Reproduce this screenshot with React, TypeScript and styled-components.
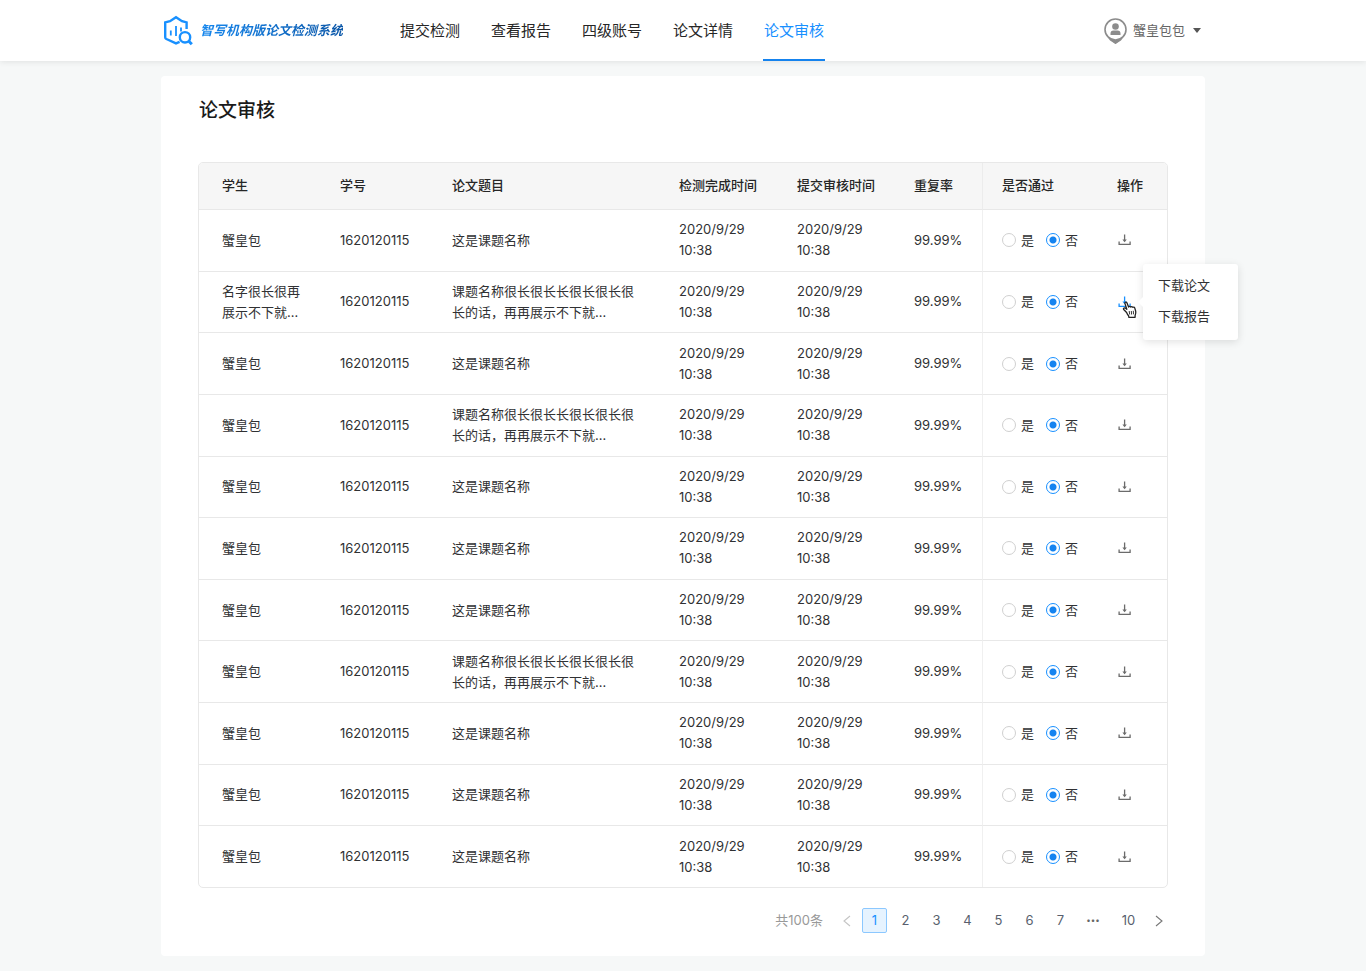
import React from 'react';
import styled, { createGlobalStyle, css } from 'styled-components';

const GlobalStyle = createGlobalStyle`
  * { box-sizing: border-box; }
  body {
    margin: 0;
    background: #f6f8f8;
    color: #303133;
    font-family: Inter, "Noto Sans CJK SC", sans-serif;
    font-size: 13px;
    line-height: 21px;
  }
  button, input { font: inherit; margin: 0; }
`;

const Header = styled.header`
  position: relative;
  height: 61px;
  background: #fff;
  box-shadow: 0 1px 6px rgba(0, 0, 0, 0.09);
`;

const Container = styled.div`
  width: 100%;
  max-width: 1044px;
  margin: 0 auto;
`;

const HeaderInner = styled(Container)`
  display: flex;
  height: 100%;
`;

const Brand = styled.a`
  display: flex;
  align-items: center;
  gap: 7px;
  margin-right: 56px;
  padding-left: 3px;
  text-decoration: none;
  white-space: nowrap;
`;

const BrandName = styled.span`
  font-weight: 700;
  font-style: italic;
  background: linear-gradient(90deg, #1687ee, #0b57a8);
  background-clip: text;
  -webkit-background-clip: text;
  color: transparent;
`;

const Nav = styled.nav`
  display: flex;
  gap: 29px;
`;

const NavLink = styled.a<{ $active?: boolean }>`
  display: flex;
  align-items: center;
  padding: 2px 1px 0;
  border-bottom: 2px solid transparent;
  color: #262626;
  font-size: 15px;
  text-decoration: none;
  white-space: nowrap;
  ${p => p.$active && css`
    color: #1890ff;
    border-bottom-color: #1583ee;
  `}
`;

const UserButton = styled.button`
  display: flex;
  align-items: center;
  gap: 6px;
  margin-left: auto;
  padding: 0 4px 0 0;
  border: 0;
  background: none;
  color: #666;
  white-space: nowrap;
`;

const Caret = styled.span`
  margin-left: 2px;
  border: 4px solid transparent;
  border-top: 5px solid #555;
  border-bottom: 0;
`;

const Card = styled.main`
  margin: 15px 0;
  padding: 21px 37px 23px;
  border-radius: 4px;
  background: #fff;
`;

const Title = styled.h1`
  margin: 0 0 37px;
  padding-left: 1px;
  color: #1a1a1a;
  font-size: 19px;
  font-weight: 500;
  line-height: 28px;
`;

const Table = styled.table`
  width: 100%;
  height: 726px;
  table-layout: fixed;
  border: 1px solid #e8e8e8;
  border-radius: 5px;
  border-spacing: 0;
`;

const Col = styled.col<{ $w: number }>`
  width: ${p => p.$w}px;
`;

const HeadCell = styled.th<{ $split?: boolean }>`
  height: 47px;
  padding: 0 0 2px ${p => (p.$split ? 19 : 23)}px;
  border-bottom: 1px solid #e8e8e8;
  border-left: ${p => (p.$split ? '1px solid #ececec' : '0')};
  background: #f6f6f6;
  color: #262626;
  font-weight: 500;
  text-align: left;
  &:first-child { border-top-left-radius: 4px; }
  &:last-child { border-top-right-radius: 4px; }
`;

const Cell = styled.td<{ $split?: boolean }>`
  padding: 9px 15px 9px ${p => (p.$split ? 19 : 23)}px;
  border-bottom: 1px solid #e8e8e8;
  border-left: ${p => (p.$split ? '1px solid #f0f0f0' : '0')};
  tr:last-child > & { border-bottom: 0; }
`;

const RadioCell = styled(Cell)`
  padding-right: 0;
`;

const Choices = styled.div`
  display: flex;
  gap: 12px;
`;

const Choice = styled.label`
  display: flex;
  align-items: center;
  gap: 5px;
`;

const Radio = styled.input`
  appearance: none;
  width: 14px;
  height: 14px;
  border: 1px solid #d0d0d0;
  border-radius: 50%;
  background: #fff;
  &:checked {
    border-color: #1890ff;
    background: radial-gradient(circle, #1583f0 3px, #fff 4px);
  }
`;

const Action = styled.div`
  position: relative;
  display: flex;
  width: 14px;
`;

const IconButton = styled.button<{ $active?: boolean }>`
  display: flex;
  padding: 0;
  border: 0;
  background: none;
  color: ${p => (p.$active ? '#1890ff' : '#6b6b6b')};
`;

const Menu = styled.div`
  position: absolute;
  z-index: 2;
  top: -31px;
  left: 26px;
  display: flex;
  flex-direction: column;
  gap: 10px;
  width: 95px;
  padding: 11px 15px 13px;
  border-radius: 3px;
  background: #fff;
  box-shadow: 0 2px 8px rgba(0, 0, 0, 0.12);
  &::before {
    content: '';
    position: absolute;
    top: 33px;
    left: -5px;
    border: 5px solid transparent;
    border-right-color: #fff;
    border-left: 0;
  }
`;

const MenuItem = styled.button`
  padding: 0;
  border: 0;
  background: none;
  color: #303133;
  text-align: left;
  white-space: nowrap;
`;

const Pointer = styled.svg`
  position: absolute;
  z-index: 3;
  top: 6px;
  left: 5px;
`;

const Pagination = styled.nav`
  display: flex;
  align-items: center;
  justify-content: flex-end;
  margin-top: 20px;
`;

const Total = styled.span`
  margin-right: 20px;
  color: #999;
`;

const PageButton = styled.button<{ $active?: boolean }>`
  display: flex;
  align-items: center;
  justify-content: center;
  width: 25px;
  height: 25px;
  margin-left: 6px;
  padding: 0;
  border: 1px solid ${p => (p.$active ? '#8cc8ff' : 'transparent')};
  border-radius: 2px;
  background: ${p => (p.$active ? '#e6f3ff' : 'none')};
  color: ${p => (p.$active ? '#1890ff' : '#595f6e')};
`;

const Arrow = styled.button`
  display: flex;
  margin-right: 5px;
  padding: 0;
  border: 0;
  background: none;
  color: #777;
  &:last-child { margin-left: 14px; }
  &:disabled { color: #c4c4c4; }
`;

const Ellipsis = styled.span`
  width: 37px;
  padding-left: 3px;
  color: #666;
  font-size: 8px;
  text-align: center;
`;

const LogoIcon = () => (
  <svg width="29" height="31" viewBox="0 0 29 31" fill="none" stroke="#1890ff" strokeWidth="2.4">
    <path d="M22.6 14V7.400l-4.600-1.200L12 2.200 6 6.200 1.200 7.400v14.800c0 .9.400 1.400 1.200 1.800L12 28.400l3.600-1.600" />
    <path d="M6.800 15.500v5M12 11v10M17 12.500v4" strokeWidth="1.800" />
    <circle cx="21" cy="22.300" r="5.200" />
    <path d="M24.600 26l3.200 3.200" strokeWidth="3" />
  </svg>
);

const AvatarIcon = () => (
  <svg width="23" height="26" viewBox="0 0 23 26">
    <path d="M5 20.500h13l-6.500 5.500z" fill="#888" />
    <circle cx="11.500" cy="11.500" r="10.500" fill="#fff" stroke="#8c8c8c" strokeWidth="1.600" />
    <path d="M4 19.500a11 11 0 0 0 15 0l-2 3-5.500 3.500L6 22.500z" fill="#8c8c8c" />
    <circle cx="11.500" cy="8.500" r="3.300" fill="#8c8c8c" />
    <path d="M6.500 17v-1.500a3 3 0 0 1 3-3h4a3 3 0 0 1 3 3V17z" fill="#8c8c8c" />
  </svg>
);

const DownloadIcon = () => (
  <svg width="14" height="14" viewBox="0 0 14 14" fill="none" stroke="currentColor" strokeWidth="1.300">
    <path d="M2.100 8.500v2.900h11V8.500M7.600 1.500v6" />
    <path d="M5.400 6.500h4.400L7.600 9.300z" fill="currentColor" stroke="none" />
  </svg>
);

const HandPointer = () => (
  <Pointer width="16" height="18" viewBox="0 0 16 18" aria-hidden="true">
    <path
      d="M4.600 11.500L1.700 8.500c-.8-1 .4-2.100 1.500-1.400l1.600 1.200L3 2.600c-.4-1.500 1.500-2 2-.7l1.600 4.200c.3-1 1.800-1 2.100 0 .5-.8 1.800-.7 2.100.3.6-.6 1.700-.3 2 .7l.9 3.200c.4 1.700-.1 3-.6 4.200v1.800H6.900l-.3-1.500c-.8-.8-1.500-2-2-3.300z"
      fill="#fff" stroke="#222" strokeWidth="1.300" strokeLinejoin="round"
    />
    <path d="M7.200 10l.5 3.500M9.300 10l.3 3.500M11.300 9.800l.2 3.500" stroke="#222" strokeWidth=".9" />
  </Pointer>
);

const Chevron = ({ right }: { right?: boolean }) => (
  <svg width="8" height="12" viewBox="0 0 8 12" fill="none" stroke="currentColor" strokeWidth="1.100">
    <path d={right ? 'M1 1l6 5-6 5' : 'M7 1L1 6l6 5'} />
  </svg>
);

const navItems = ['提交检测', '查看报告', '四级账号', '论文详情', '论文审核'];
const columnWidths = [118, 112, 227, 118, 117, 91, 112, 73];
const headings = ['学生', '学号', '论文题目', '检测完成时间', '提交审核时间', '重复率', '是否通过', '操作'];
const shortTitle = '这是课题名称';
const longTitle = '课题名称很长很长长很长很长很长的话，再再展示不下就…';
const longTitleRows = [1, 3, 7];
const rows = Array.from({ length: 11 }, (_, i) => ({
  student: i === 1 ? '名字很长很再展示不下就…' : '蟹皇包',
  number: '1620120115',
  title: longTitleRows.includes(i) ? longTitle : shortTitle,
  time: '2020/9/29 10:38',
  rate: '99.99%',
  menuOpen: i === 1,
}));

export default function App() {
  return (
    <>
      <GlobalStyle />
      <Header>
        <HeaderInner>
          <Brand href="#">
            <LogoIcon />
            <BrandName>智写机构版论文检测系统</BrandName>
          </Brand>
          <Nav>
            {navItems.map(item => (
              <NavLink key={item} href="#" $active={item === '论文审核'}>{item}</NavLink>
            ))}
          </Nav>
          <UserButton>
            <AvatarIcon />
            蟹皇包包
            <Caret />
          </UserButton>
        </HeaderInner>
      </Header>
      <Container>
        <Card>
          <Title>论文审核</Title>
          <Table>
            <colgroup>
              {columnWidths.map((w, i) => <Col key={i} $w={w} />)}
            </colgroup>
            <thead>
              <tr>
                {headings.map((h, i) => <HeadCell key={h} $split={i === 6}>{h}</HeadCell>)}
              </tr>
            </thead>
            <tbody>
              {rows.map((row, i) => (
                <tr key={i}>
                  <Cell>{row.student}</Cell>
                  <Cell>{row.number}</Cell>
                  <Cell>{row.title}</Cell>
                  <Cell>{row.time}</Cell>
                  <Cell>{row.time}</Cell>
                  <Cell>{row.rate}</Cell>
                  <RadioCell $split>
                    <Choices>
                      <Choice><Radio type="radio" name={`pass-${i}`} />是</Choice>
                      <Choice><Radio type="radio" name={`pass-${i}`} defaultChecked />否</Choice>
                    </Choices>
                  </RadioCell>
                  <Cell>
                    <Action>
                      <IconButton aria-label="下载" $active={row.menuOpen}><DownloadIcon /></IconButton>
                      {row.menuOpen && (
                        <>
                          <HandPointer />
                          <Menu>
                            <MenuItem>下载论文</MenuItem>
                            <MenuItem>下载报告</MenuItem>
                          </Menu>
                        </>
                      )}
                    </Action>
                  </Cell>
                </tr>
              ))}
            </tbody>
          </Table>
          <Pagination aria-label="分页">
            <Total>共100条</Total>
            <Arrow disabled aria-label="上一页"><Chevron /></Arrow>
            {[1, 2, 3, 4, 5, 6, 7].map(n => (
              <PageButton key={n} $active={n === 1}>{n}</PageButton>
            ))}
            <Ellipsis>•••</Ellipsis>
            <PageButton>10</PageButton>
            <Arrow aria-label="下一页"><Chevron right /></Arrow>
          </Pagination>
        </Card>
      </Container>
    </>
  );
}
